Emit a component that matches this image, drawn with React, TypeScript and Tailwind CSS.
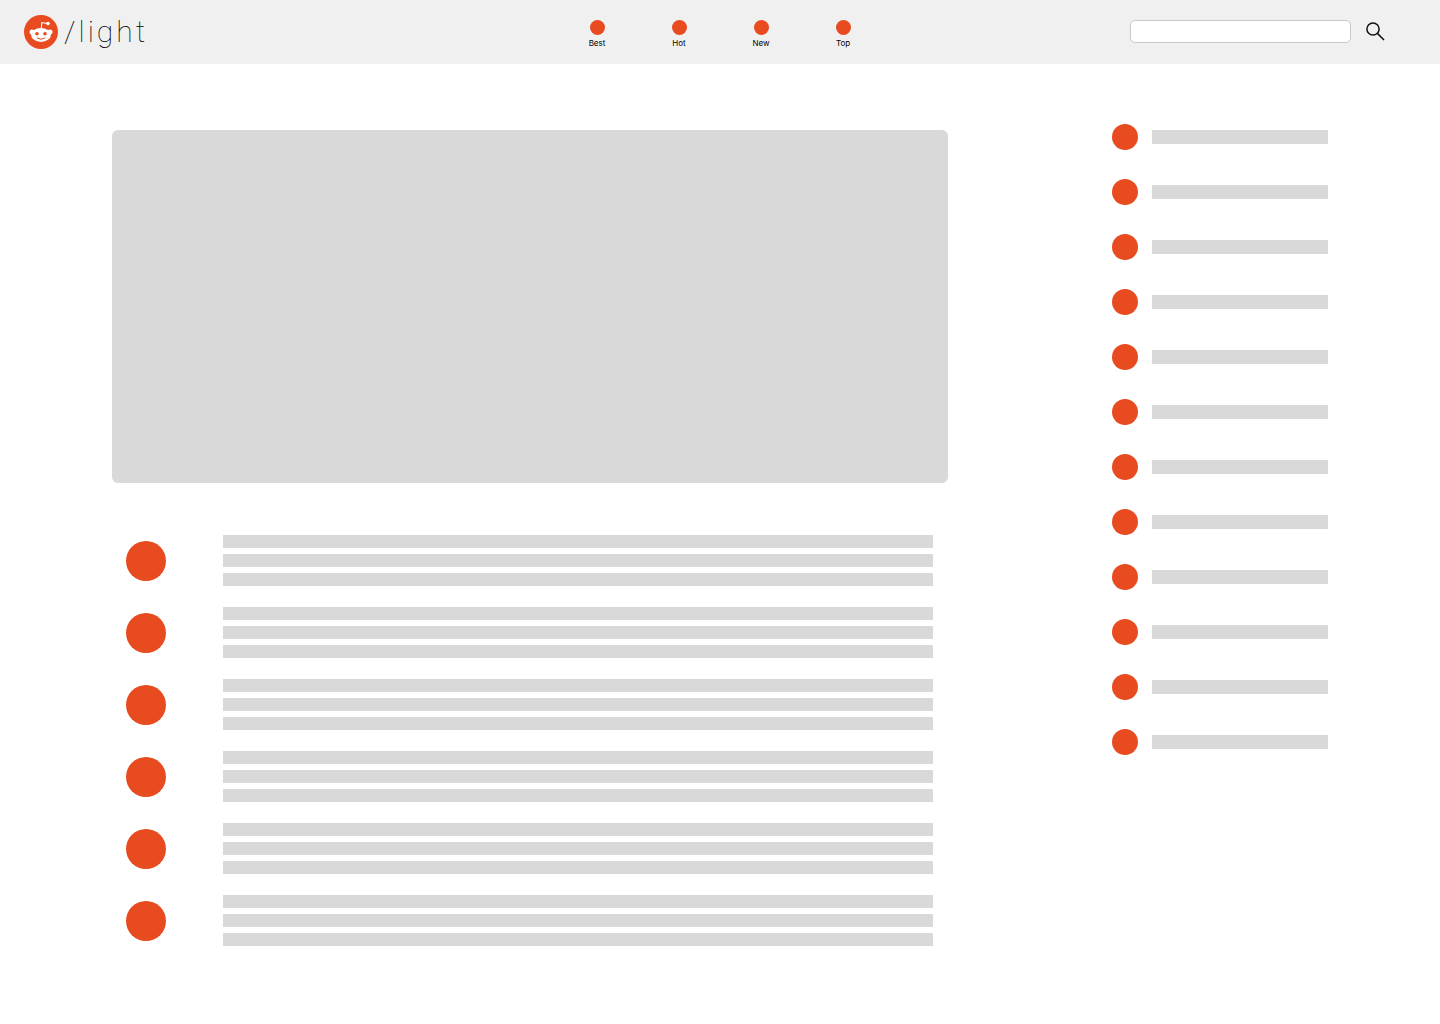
const sorts = ["Best", "Hot", "New", "Top"];
const posts = Array.from({ length: 6 }, (_, i) => i);
const communities = Array.from({ length: 12 }, (_, i) => i);

function Logo() {
  return (
    <svg viewBox="0 0 34 34" className="size-[34px] shrink-0" aria-hidden="true">
      <circle cx="17" cy="17" r="17" fill="#e84b20" />
      <path d="M17.3 13.5 17.8 7.5 23 8.5" fill="none" stroke="#fff" strokeWidth="1.1" strokeLinejoin="round" />
      <circle cx="24" cy="8.6" r="1.8" fill="#fff" />
      <circle cx="8" cy="17" r="2.5" fill="#fff" />
      <circle cx="26" cy="17" r="2.5" fill="#fff" />
      <ellipse cx="17" cy="19.9" rx="9.9" ry="7" fill="#fff" />
      <circle cx="13" cy="18.7" r="1.8" fill="#e84b20" />
      <circle cx="21" cy="18.7" r="1.8" fill="#e84b20" />
      <path d="M13.1 23.1Q17 25.6 20.9 23.1" fill="none" stroke="#e84b20" strokeWidth="1" strokeLinecap="round" />
    </svg>
  );
}

function Header() {
  return (
    <header className="grid h-16 grid-cols-[1fr_auto_1fr] items-center bg-[#f0f0f0] px-6">
      <a href="#" className="flex items-center gap-1.5 justify-self-start">
        <Logo />
        <span className="font-['Roboto',sans-serif] text-3xl leading-8 font-thin tracking-widest">/light</span>
      </a>
      <nav className="flex gap-[65px] pt-[3px]">
        {sorts.map((name) => (
          <a key={name} href="#" className="flex w-[17px] flex-col items-center gap-1 text-[8px] leading-2">
            <span className="size-[15px] rounded-full bg-[#e84b20]" />
            {name}
          </a>
        ))}
      </nav>
      <form
        className="flex items-center gap-[15px] justify-self-end pr-[31px] pb-px"
        onSubmit={(e) => e.preventDefault()}
      >
        <input
          type="search"
          aria-label="Search"
          className="h-[23px] w-[221px] rounded-[5px] border border-[#c8c8c8] bg-white px-2 text-xs outline-none"
        />
        <button type="submit" aria-label="Search">
          <svg viewBox="0 0 19 19" className="size-[19px]" fill="none" stroke="#111" strokeWidth="1.5" aria-hidden="true">
            <circle cx="7" cy="7" r="6.1" />
            <path d="M11.4 11.4 18 18" />
          </svg>
        </button>
      </form>
    </header>
  );
}

export default function App() {
  return (
    <div className="min-h-screen bg-white font-['Inter',sans-serif] text-black">
      <Header />
      <div className="flex items-start gap-[164px] px-28 pt-[60px] pb-16">
        <main className="min-w-0 flex-1 pt-1.5">
          <div className="h-[353px] rounded-md bg-[#d9d9d9]" />
          <ul className="mt-[52px] flex flex-col gap-[21px] pr-[15px] pl-[14px]">
            {posts.map((id) => (
              <li key={id} className="flex items-center gap-[57px]">
                <span className="size-10 shrink-0 rounded-full bg-[#e84b20]" />
                <div className="flex flex-1 flex-col gap-1.5">
                  <div className="h-[13px] bg-[#d9d9d9]" />
                  <div className="h-[13px] bg-[#d9d9d9]" />
                  <div className="h-[13px] bg-[#d9d9d9]" />
                </div>
              </li>
            ))}
          </ul>
        </main>
        <aside className="w-[216px] shrink-0">
          <ul className="flex flex-col gap-[29px]">
            {communities.map((id) => (
              <li key={id} className="flex items-center gap-[14px]">
                <span className="size-[26px] shrink-0 rounded-full bg-[#e84b20]" />
                <div className="h-[14px] flex-1 bg-[#d9d9d9]" />
              </li>
            ))}
          </ul>
        </aside>
      </div>
    </div>
  );
}
